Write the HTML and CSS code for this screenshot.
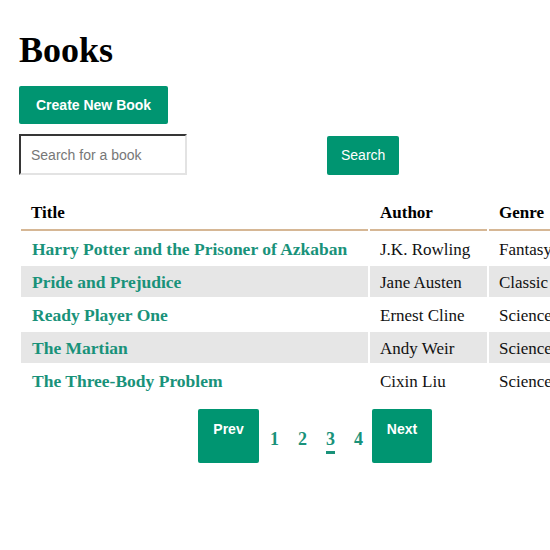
FILE: index.html
```html
<!DOCTYPE html>
<html lang="en">
<head>
<meta charset="utf-8">
<title>Books</title>
<link rel="stylesheet" href="styles.css">
</head>
<body>
<main class="page">
  <h1 class="page-title">Books</h1>
  <div class="actions">
    <a class="btn btn-create" href="#">Create New Book</a>
  </div>
  <form class="search-form">
    <input class="search-input" type="text" placeholder="Search for a book">
    <button class="btn btn-search" type="button">Search</button>
  </form>
  <table class="books">
    <colgroup>
      <col class="col-title">
      <col class="col-author">
      <col class="col-genre">
    </colgroup>
    <thead>
      <tr><th>Title</th><th>Author</th><th>Genre</th></tr>
    </thead>
    <tbody>
      <tr><td><a href="#">Harry Potter and the Prisoner of Azkaban</a></td><td>J.K. Rowling</td><td>Fantasy</td></tr>
      <tr><td><a href="#">Pride and Prejudice</a></td><td>Jane Austen</td><td>Classic</td></tr>
      <tr><td><a href="#">Ready Player One</a></td><td>Ernest Cline</td><td>Science Fiction</td></tr>
      <tr><td><a href="#">The Martian</a></td><td>Andy Weir</td><td>Science Fiction</td></tr>
      <tr><td><a href="#">The Three-Body Problem</a></td><td>Cixin Liu</td><td>Science Fiction</td></tr>
    </tbody>
  </table>
  <nav class="pagination">
    <a class="btn btn-page btn-prev" href="#">Prev</a>
    <div class="pages">
      <a class="page-num" href="#">1</a>
      <a class="page-num" href="#">2</a>
      <a class="page-num active" href="#">3</a>
      <a class="page-num" href="#">4</a>
    </div>
    <a class="btn btn-page btn-next" href="#">Next</a>
  </nav>
</main>
</body>
</html>
```
FILE: styles.css
```css
html, body {
  margin: 0;
  padding: 0;
  background: #fff;
  overflow-x: hidden;
}
body {
  font-family: "Liberation Serif", "Times New Roman", serif;
  color: #111;
}
.page {
  width: 592px;
  padding: 30px 0 0 19px;
}
.page-title {
  margin: 0;
  font-size: 36px;
  line-height: 40px;
  font-weight: bold;
  color: #000;
}
.actions {
  margin-top: 16px;
  display: flex;
}
.btn {
  display: inline-block;
  background: #009571;
  color: #fff;
  font-family: "Liberation Sans", Arial, sans-serif;
  font-size: 14px;
  text-decoration: none;
  border: none;
  border-radius: 2px;
}
.btn-create {
  height: 38px;
  line-height: 38px;
  padding: 0 17px;
  font-weight: bold;
}
.search-form {
  margin-top: 10px;
  display: flex;
  align-items: flex-end;
  gap: 140px;
}
.search-input {
  box-sizing: border-box;
  width: 168px;
  height: 41px;
  margin: 0;
  padding: 0 10px;
  border: 2px inset #ddd;
  border-top-color: #8a8a8a;
  border-left-color: #8a8a8a;
  border-right-color: #e3e3e3;
  border-bottom-color: #e3e3e3;
  font-family: "Liberation Sans", Arial, sans-serif;
  font-size: 14px;
  color: #333;
}
.search-input::placeholder {
  color: #777;
}
.btn-search {
  height: 39px;
  padding: 0 14px;
  line-height: 39px;
}
.books {
  margin-top: 20px;
  width: 592px;
  table-layout: fixed;
  border-collapse: separate;
  border-spacing: 2px;
  font-size: 17px;
}
.col-title { width: 347px; }
.col-author { width: 117px; }
.books th,
.books td {
  box-sizing: border-box;
  padding: 6px 10px 4px;
  line-height: 21px;
  text-align: left;
  white-space: nowrap;
  overflow: hidden;
}
.books th {
  padding: 5px 10px 6px;
  font-weight: bold;
  color: #000;
  border-bottom: 2px solid #d6b795;
}
.books td:first-child {
  padding-left: 11px;
}
.books tbody tr:nth-child(even) td {
  background: #e6e6e6;
}
.books td a {
  color: #19927a;
  font-size: 17.5px;
  font-weight: bold;
  text-decoration: none;
}
.pagination {
  margin-top: 11px;
  display: flex;
  justify-content: center;
  align-items: flex-start;
}
.btn-page {
  box-sizing: border-box;
  height: 54px;
  padding: 12px 0 0;
  line-height: 16px;
  font-weight: bold;
  text-align: center;
}
.btn-prev { width: 61px; }
.btn-next { width: 60px; }
.pages {
  display: flex;
  gap: 19px;
  margin: 0 9px 0 11px;
  padding-top: 20px;
}
.page-num {
  font-size: 18px;
  line-height: 20px;
  font-weight: bold;
  color: #19927a;
  text-decoration: none;
  padding-bottom: 2px;
  border-bottom: 3px solid transparent;
}
.page-num.active {
  border-bottom-color: #19927a;
}
```
